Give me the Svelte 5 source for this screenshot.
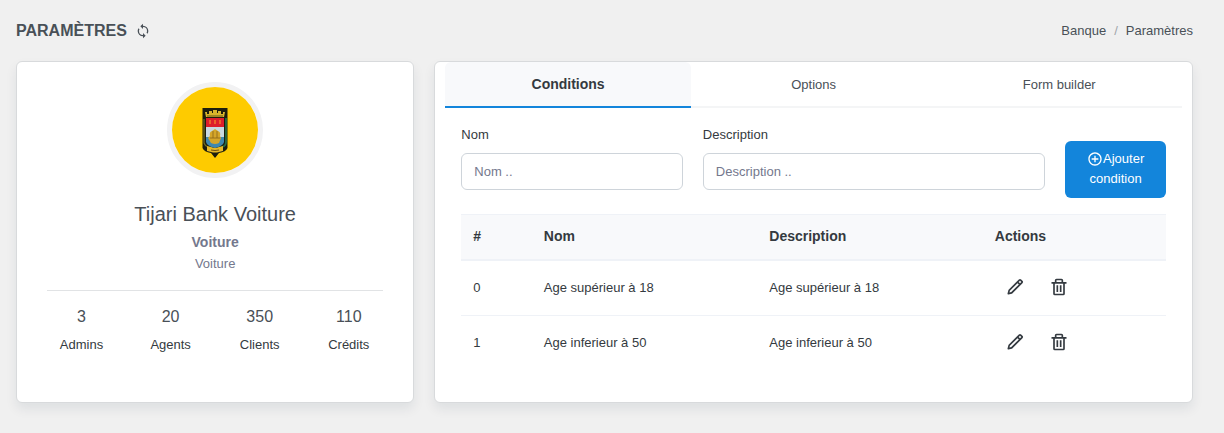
<script>
  const stats = [
    { value: 3, label: 'Admins' },
    { value: 20, label: 'Agents' },
    { value: 350, label: 'Clients' },
    { value: 110, label: 'Crédits' },
  ];
  const tabs = ['Conditions', 'Options', 'Form builder'];
  const conditions = [
    { nom: 'Age supérieur à 18', description: 'Age supérieur à 18' },
    { nom: 'Age inferieur à 50', description: 'Age inferieur à 50' },
  ];
  let active = $state(0);
</script>

<div class="page">
  <header>
    <h1>PARAMÈTRES</h1>
    <button class="icon refresh" aria-label="Actualiser">
      <svg viewBox="0 0 24 24" width="16" height="16"><path d="M12,18A6,6 0 0,1 6,12C6,11 6.25,10.03 6.7,9.2L5.24,7.74C4.46,8.97 4,10.43 4,12A8,8 0 0,0 12,20V23L16,19L12,15M12,4V1L8,5L12,9V6A6,6 0 0,1 18,12C18,13 17.75,13.97 17.3,14.8L18.76,16.26C19.54,15.03 20,13.57 20,12A8,8 0 0,0 12,4Z" /></svg>
    </button>
    <nav>
      <a href="#banque">Banque</a><span>/</span><a href="#parametres">Paramètres</a>
    </nav>
  </header>

  <main>
    <section class="card profile">
      <div class="avatar">
        <svg viewBox="0 0 86 86" width="86" height="86" aria-hidden="true">
          <rect width="86" height="86" fill="#fecb00" />
          <path d="M30.500 21H55.500V61Q54 65 47 66L43 71L39 66Q32 65 30.500 61Z" fill="#1d1e0d" />
          <path d="M34 30L33 25H35V27H37V24H40V26H41V23H45V26H46V24H49V27H51V25H53L52 30Z" fill="#d8b62c" />
          <path d="M35 29H51" stroke="#6b5818" />
          <path d="M34 31H52V40H34Z" fill="#dd1f2c" />
          <path d="M38 33v4M43 33v4M48 33v4" stroke="#f0782d" stroke-width="1.500" />
          <path d="M34 40H52V50H34Z" fill="#c9d9e2" />
          <path d="M34 50H52V55Q51 59 43 61Q35 59 34 55Z" fill="#3f88b0" />
          <path d="M38 49q-1-4 2-5l3-2l3 2q3 1 2 5l1 2l-2 5q-4 2-8 0l-3-5Z" fill="#d5a62a" />
          <path d="M41 44v7M45 44v7M38 51h10" stroke="#8c6519" stroke-width=".8" />
          <path d="M32 32V56Q33 59 36 60" fill="none" stroke="#776f20" stroke-width="1.200" />
          <path d="M54 31V55Q54 59 50 60" fill="none" stroke="#276b43" stroke-width="1.800" />
          <path d="M35 59L39 60Q43 62 47 60L51 59V64L47 65Q43 66 39 65L35 64Z" fill="#e5b829" />
          <path d="M39 63q4 1 8 0" fill="none" stroke="#6c4e10" />
        </svg>
      </div>
      <h2>Tijari Bank Voiture</h2>
      <strong>Voiture</strong>
      <p>Voiture</p>
      <hr />
      <dl>
        {#each stats as s}
          <div><dd>{s.value}</dd><dt>{s.label}</dt></div>
        {/each}
      </dl>
    </section>

    <section class="card settings">
      <div class="tabs" role="tablist">
        {#each tabs as tab, i}
          <button role="tab" aria-selected={active === i} class:active={active === i} onclick={() => (active = i)}>{tab}</button>
        {/each}
      </div>
      <div class="panel">
        <form onsubmit={(e) => e.preventDefault()}>
          <div class="field">
            <label for="nom">Nom</label>
            <input id="nom" type="text" placeholder="Nom .." />
          </div>
          <div class="field">
            <label for="description">Description</label>
            <input id="description" type="text" placeholder="Description .." />
          </div>
          <button class="add" type="submit">
            <svg viewBox="0 0 24 24" width="16" height="16"><path d="M13 7h-2v4H7v2h4v4h2v-4h4v-2h-4z" /><path d="M12 2C6.486 2 2 6.486 2 12s4.486 10 10 10 10-4.486 10-10S17.514 2 12 2zm0 18c-4.411 0-8-3.589-8-8s3.589-8 8-8 8 3.589 8 8-3.589 8-8 8z" /></svg>Ajouter condition
          </button>
        </form>
        <table>
          <thead>
            <tr><th class="num">#</th><th class="wide">Nom</th><th class="wide">Description</th><th>Actions</th></tr>
          </thead>
          <tbody>
            {#each conditions as c, i}
              <tr>
                <td>{i}</td>
                <td>{c.nom}</td>
                <td>{c.description}</td>
                <td>
                  <div class="actions">
                    <button class="icon" aria-label="Modifier">
                      <svg viewBox="0 0 24 24" width="20" height="20"><path d="M4 21a1 1 0 0 0 .24 0l4-1a1 1 0 0 0 .47-.26L21 7.41a2 2 0 0 0 0-2.82L19.42 3a2 2 0 0 0-2.83 0L4.3 15.29a1.06 1.06 0 0 0-.27.47l-1 4A1 1 0 0 0 3.76 21 .93.93 0 0 0 4 21zM18 4.410 19.590 6 18 7.590 16.420 6zM5.910 16.510 15 7.410 16.590 9l-9.100 9.100-2.110.520z" /></svg>
                    </button>
                    <button class="icon" aria-label="Supprimer">
                      <svg viewBox="0 0 24 24" width="20" height="20"><path d="M5 20a2 2 0 0 0 2 2h10a2 2 0 0 0 2-2V8h2V6h-4V4a2 2 0 0 0-2-2H9a2 2 0 0 0-2 2v2H3v2h2zM9 4h6v2H9zM8 8h9v12H7V8z" /><path d="M9 10h2v8H9zm4 0h2v8h-2z" /></svg>
                    </button>
                  </div>
                </td>
              </tr>
            {/each}
          </tbody>
        </table>
      </div>
    </section>
  </main>
</div>

<style>
  :global(body) {
    margin: 0;
    background: #f0f0f0;
  }
  .page {
    box-sizing: border-box;
    padding: 0 31px 30px 16px;
    font: 13px/21px 'Liberation Sans', Arial, sans-serif;
    color: #343a40;
  }
  button,
  input {
    font: inherit;
    color: inherit;
  }
  button {
    cursor: pointer;
  }
  svg {
    display: block;
    fill: currentColor;
  }
  h1,
  h2,
  p,
  dl,
  dd {
    margin: 0;
  }
  header {
    display: flex;
    align-items: center;
    height: 61px;
    color: #495057;
  }
  h1 {
    font-size: 16px;
    font-weight: 700;
  }
  .icon {
    padding: 0;
    border: 0;
    background: none;
  }
  .refresh {
    margin-left: 8px;
  }
  nav {
    display: flex;
    gap: 8px;
    margin-left: auto;
  }
  nav a {
    color: inherit;
    text-decoration: none;
  }
  nav span {
    color: #a0a5ab;
  }
  main {
    display: grid;
    grid-template-columns: minmax(0, 21fr) minmax(0, 40fr);
    gap: 20px;
  }
  .card {
    background: #fff;
    border: 1px solid #d8dadc;
    border-radius: 6px;
    box-shadow: 0 6px 12px rgba(18, 38, 63, 0.08);
  }
  .profile {
    padding: 20px 30px 47px;
    text-align: center;
  }
  .avatar {
    width: 86px;
    margin: 0 auto 24px;
    border: 5px solid #f2f2f3;
    border-radius: 50%;
    overflow: hidden;
  }
  h2 {
    margin-bottom: 6px;
    font-size: 20px;
    line-height: 24px;
    font-weight: 400;
    color: #495057;
  }
  .profile strong {
    display: block;
    font-size: 14px;
    color: #74788d;
  }
  .profile p {
    color: #74788d;
  }
  hr {
    margin: 16px 0 15px;
    border: 0;
    border-top: 1px solid #e1e3e5;
  }
  dl {
    display: flex;
    margin: 0 -10px;
  }
  dl div {
    display: flex;
    flex: 1;
    flex-direction: column;
    gap: 7px;
  }
  dd {
    font-size: 16px;
    color: #495057;
  }
  .settings {
    padding: 0 10px 32px;
  }
  .tabs {
    display: grid;
    grid-template-columns: repeat(3, 1fr);
  }
  .tabs button {
    height: 46px;
    padding: 0;
    border: 0;
    border-bottom: 2px solid #f4f5f6;
    background: none;
    color: #495057;
  }
  .tabs .active {
    border-color: #1385db;
    border-radius: 6px 6px 0 0;
    background: #f8f9fb;
    color: #343a40;
    font-size: 14px;
    font-weight: 700;
  }
  .panel {
    padding: 16px 16px 0;
  }
  form {
    display: grid;
    grid-template-columns: 11fr 17fr 5fr;
    gap: 20px;
    align-items: end;
  }
  .field {
    display: grid;
    gap: 8px;
    margin-bottom: 8px;
  }
  input {
    box-sizing: border-box;
    width: 100%;
    height: 37px;
    padding: 0 12px;
    border: 1px solid #ced4da;
    border-radius: 6px;
    background: #fff;
  }
  input::placeholder {
    color: #74788d;
    opacity: 1;
  }
  .add {
    height: 57px;
    padding: 0 8px 2px;
    border: 0;
    border-radius: 6px;
    background: #1385db;
    color: #fff;
    line-height: 20px;
  }
  .add svg {
    display: inline-block;
    vertical-align: -4px;
  }
  table {
    width: 100%;
    margin-top: 16px;
    border-collapse: separate;
    border-spacing: 0;
    table-layout: fixed;
  }
  th,
  td {
    box-sizing: border-box;
    height: 55px;
    padding: 0 12px 2px;
    border-top: 1px solid #eff2f7;
    text-align: left;
  }
  th {
    height: 47px;
    border-bottom: 2px solid #eff2f7;
    background: #f8f9fb;
    font-size: 14px;
  }
  tbody tr:first-child td {
    height: 54px;
    border-top: 0;
  }
  .num {
    width: 10%;
  }
  .wide {
    width: 32%;
  }
  .actions {
    display: flex;
    gap: 24px;
    padding: 0 10px;
  }
</style>
